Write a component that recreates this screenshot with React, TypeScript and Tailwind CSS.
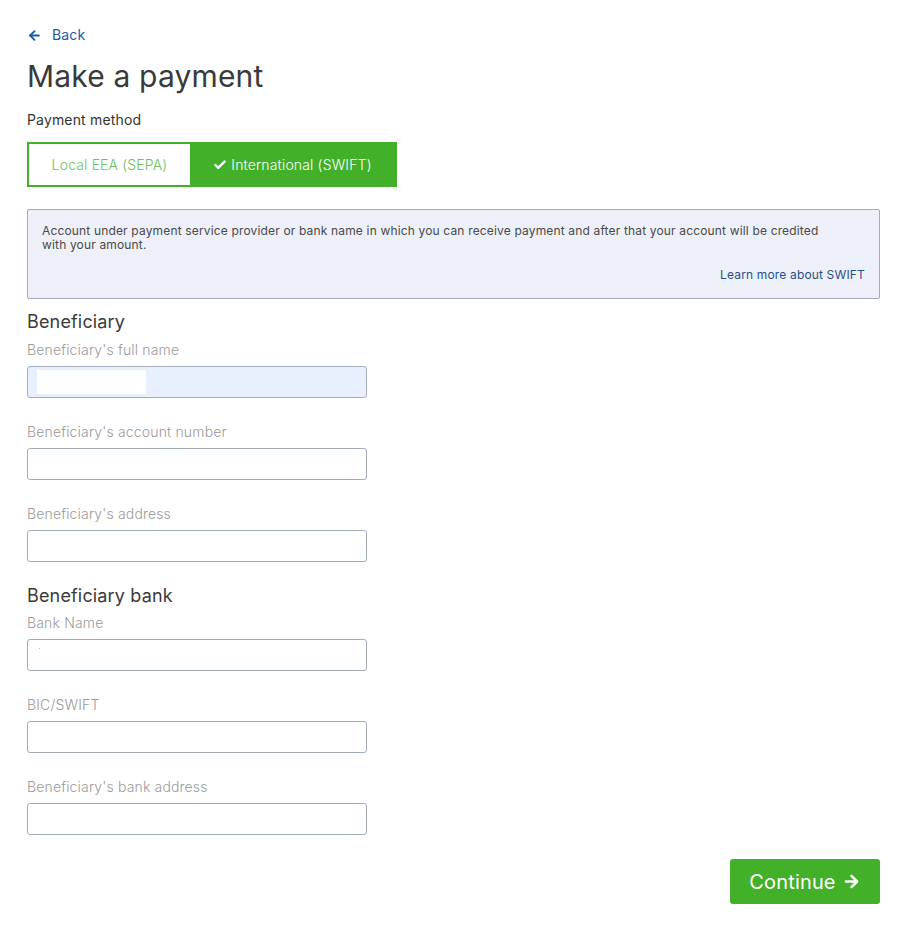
import { ArrowLeft, ArrowRight, Check } from "lucide-react"

const font = { fontFamily: 'Inter, "Open Sans", sans-serif' }

function Field({ label, autofill = false, dot = false }: { label: string; autofill?: boolean; dot?: boolean }) {
  return (
    <div className="flex flex-col">
      <label className="text-[14px] leading-[20px] text-[#9a9a9a] font-light">{label}</label>
      <div
        className={`mt-[6px] h-[32px] w-[340px] rounded-[3px] border border-[#a3abbd] ${
          autofill ? "bg-[#e8f0fe] px-[9px] py-[3px]" : "bg-white"
        }`}
      >
        {autofill && <div className="h-full w-[109px] bg-white" />}
        {dot && <div className="ml-[11px] mt-[8px] h-[1px] w-[1px] bg-[#bbb]" />}
      </div>
    </div>
  )
}

export default function App() {
  return (
    <div className="min-h-screen bg-white text-[#333] tracking-[0.01em]" style={font}>
      <div className="pl-[27px] pr-[26px] pt-[25px] pb-[26px]">
        <a href="#" className="flex items-center gap-[10px] text-[14px] leading-[20px] text-[#1c5aa8]">
          <ArrowLeft className="h-[15px] w-[15px]" strokeWidth={3} />
          <span>Back</span>
        </a>

        <h1 className="mt-[11px] text-[30px] leading-[40px] font-normal text-[#3a3a3a]">Make a payment</h1>

        <div className="mt-[14px] text-[14px] leading-[20px] text-[#333]">Payment method</div>

        <div className="mt-[12px] flex h-[45px] w-[370px] border-2 border-[#43b02a]">
          <button className="w-[161px] bg-white text-[14px] font-light text-[#6cbf5a]">Local EEA (SEPA)</button>
          <button className="flex flex-1 items-center justify-center gap-[4px] bg-[#43b02a] text-[14px] font-light text-white">
            <Check className="h-[14px] w-[14px]" strokeWidth={4} />
            International (SWIFT)
          </button>
        </div>

        <div className="mt-[22px] h-[90px] rounded-[2px] border border-[#a3abbd] bg-[#edf0f8] pl-[14px] pr-[14px] pt-[14px] text-[12px] leading-[14px] text-[#4a4a4a]">
          <p className="pr-[36px]">
            Account under payment service provider or bank name in which you can receive payment and after that your
            account will be credited with your amount.
          </p>
          <div className="mt-[16px] text-right">
            <a href="#" className="text-[12px] text-[#2a4f8a]">
              Learn more about SWIFT
            </a>
          </div>
        </div>

        <h2 className="mt-[10px] text-[18px] leading-[26px] text-[#3a3a3a]">Beneficiary</h2>
        <div className="mt-[5px] flex flex-col gap-[24px]">
          <Field label="Beneficiary's full name" autofill />
          <Field label="Beneficiary's account number" />
          <Field label="Beneficiary's address" />
        </div>

        <h2 className="mt-[21px] text-[18px] leading-[26px] text-[#3a3a3a]">Beneficiary bank</h2>
        <div className="mt-[4px] flex flex-col gap-[24px]">
          <Field label="Bank Name" dot />
          <Field label="BIC/SWIFT" />
          <Field label="Beneficiary's bank address" />
        </div>

        <div className="mt-[24px] flex justify-end">
          <button className="flex h-[45px] w-[150px] items-center justify-center gap-[6px] rounded-[3px] bg-[#43b02a] text-[20px] text-white">
            Continue
            <ArrowRight className="h-[19px] w-[19px]" strokeWidth={3.2} />
          </button>
        </div>
      </div>
    </div>
  )
}
